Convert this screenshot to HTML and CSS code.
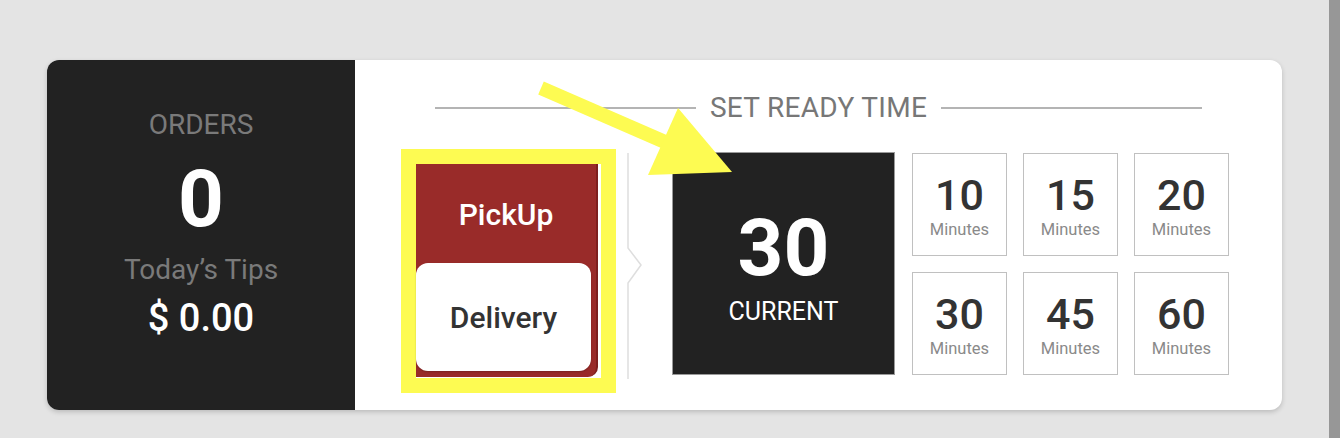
FILE: index.html
```html
<!DOCTYPE html>
<html>
	<head>
		<meta charset="utf-8">
		<title>Set Ready Time</title>
		<link rel="stylesheet" href="styles.css">
	</head>
	<body>
		<div class="page">
			<div class="card">
				<div class="stats">
					<p class="label">ORDERS</p>
					<h2 class="count">0</h2>
					<p class="label tip-label">Today’s Tips</p>
					<h3 class="tips">$ 0.00</h3>
				</div>
				<div class="ready">
					<div class="title"><span>SET READY TIME</span></div>
					<div class="row">
						<div class="mark">
							<div class="toggle">
								<span class="opt on">PickUp</span>
								<span class="opt off">Delivery</span>
							</div>
						</div>
						<svg class="divider" width="16" height="226" viewBox="0 0 16 226">
							<polyline points="1,0 1,95 14,112 1,130 1,226" fill="none" stroke="#dedede" stroke-width="1.5"/>
						</svg>
						<div class="current">
							<b>30</b>
							<span>CURRENT</span>
						</div>
						<div class="times">
							<div class="time"><b>10</b><span>Minutes</span></div>
							<div class="time"><b>15</b><span>Minutes</span></div>
							<div class="time"><b>20</b><span>Minutes</span></div>
							<div class="time"><b>30</b><span>Minutes</span></div>
							<div class="time"><b>45</b><span>Minutes</span></div>
							<div class="time"><b>60</b><span>Minutes</span></div>
						</div>
					</div>
				</div>
				<!-- annotation arrow drawn over the card -->
				<svg class="arrow" width="220" height="110" viewBox="0 0 220 110">
					<line x1="8" y1="8" x2="132" y2="62" stroke="#fdfb52" stroke-width="14"/>
					<polygon points="145,28 199,92 115,95" fill="#fdfb52"/>
				</svg>
			</div>
			<div class="edge"></div>
		</div>
	</body>
</html>
```
FILE: styles.css
```css
*{
	padding: 0;
	margin: 0;
	box-sizing: border-box;
}
body{
	background: #e4e4e4;
	font-family: Roboto, "Liberation Sans", sans-serif;
}
.page{
	display: flex;
	height: 438px;
}
.card{
	width: 1235px;
	height: 350px;
	margin: 60px 0 0 47px;
	display: flex;
	background: #fff;
	border-radius: 12px;
	box-shadow: 0 2px 5px rgba(0,0,0,0.18);
	position: relative;
	overflow: hidden;
}
.edge{
	width: 11px;
	margin-left: auto;
	background: #979797;
}
.stats{
	width: 308px;
	background: #222;
	display: flex;
	flex-direction: column;
	align-items: center;
	padding-top: 48px;
}
.label{
	font-size: 28px;
	line-height: 34px;
	color: #7a7a7a;
}
.count{
	font-size: 80px;
	font-weight: 700;
	line-height: 92px;
	color: #fff;
	margin-top: 11px;
}
.tip-label{
	margin-top: 8px;
}
.tips{
	font-size: 38px;
	font-weight: 500;
	line-height: 46px;
	color: #fff;
	margin-top: 8px;
}
.ready{
	flex: 1;
	padding: 30px 52px 0 46px;
}
.title{
	display: flex;
	align-items: center;
	gap: 14px;
	margin: 0 28px 0 34px;
	color: #777;
	font-size: 28px;
	line-height: 36px;
	letter-spacing: 0.3px;
}
.title:before,.title:after{
	content: '';
	flex: 1;
	height: 1.5px;
	background: #b4b4b4;
}
.row{
	display: flex;
	align-items: flex-start;
	margin-top: 26px;
}
.mark{
	margin-top: -3px;
	border: 15px solid #fdfb52;
	padding: 0 3px 1px 0;
	background: #fff;
}
.toggle{
	width: 182px;
	height: 213px;
	background: #992b29;
	border-right: 2px solid #7d1f1e;
	border-radius: 0 0 10px 0;
	display: flex;
	flex-direction: column;
}
.opt{
	display: flex;
	align-items: center;
	justify-content: center;
	font-size: 30px;
	font-weight: 500;
}
.on{
	height: 99px;
	padding-top: 1px;
	color: #fff;
}
.off{
	width: 175px;
	height: 108px;
	background: #fff;
	color: #333;
	border-radius: 12px;
	box-shadow: 0 1px 2px rgba(0,0,0,0.2);
}
.divider{
	margin: 1px 0 0 11px;
}
.current{
	width: 223px;
	height: 223px;
	margin-left: 29px;
	background: #222;
	border: 1px solid #9a9a9a;
	color: #fff;
	display: flex;
	flex-direction: column;
	align-items: center;
	padding-top: 52px;
}
.current b{
	font-size: 80px;
	line-height: 86px;
}
.current span{
	font-size: 25px;
	line-height: 30px;
	margin-top: 6px;
}
.times{
	margin-left: 17px;
	display: grid;
	grid-template-columns: repeat(3,95px);
	grid-auto-rows: 103px;
	gap: 16px;
	margin-top: 1px;
}
.time{
	border: 1.5px solid #c0c0c0;
	display: flex;
	flex-direction: column;
	align-items: center;
	padding-top: 17px;
}
.time b{
	font-size: 43px;
	font-weight: 500;
	line-height: 48px;
	color: #333;
}
.time span{
	font-size: 16.5px;
	line-height: 20px;
	color: #8a8a8a;
	margin-top: 1px;
}
.arrow{
	position: absolute;
	left: 486px;
	top: 20px;
}
```
